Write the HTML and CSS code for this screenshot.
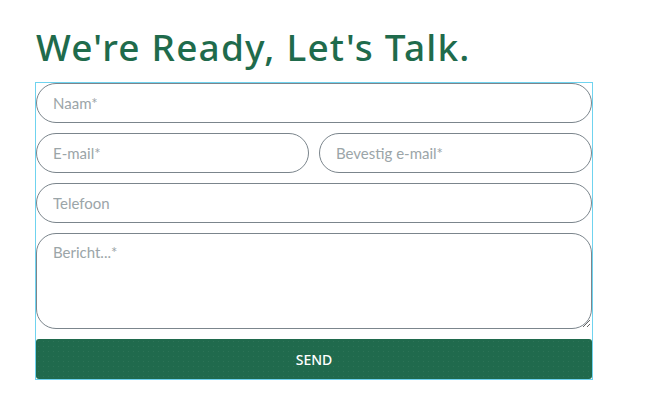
FILE: index.html
```html
<!DOCTYPE html>
<html lang="nl">
<head>
<meta charset="utf-8">
<title>Contact</title>
<link rel="stylesheet" href="styles.css">
</head>
<body>
<main class="page">
  <h1 class="title">We're Ready, Let's Talk.</h1>
  <form class="form">
    <input class="field" type="text" placeholder="Naam*">
    <div class="row">
      <input class="field" type="email" placeholder="E-mail*">
      <input class="field" type="email" placeholder="Bevestig e-mail*">
    </div>
    <input class="field" type="tel" placeholder="Telefoon">
    <textarea class="field area" placeholder="Bericht...*"></textarea>
    <button class="send" type="button">SEND</button>
  </form>
</main>
</body>
</html>
```

FILE: styles.css
```css
html, body {
  margin: 0;
  padding: 0;
  background: #ffffff;
}
.page {
  padding: 21px 0 0 35px;
  width: 558px;
}
.title {
  margin: 0 0 10px 1px;
  font-family: "Noto Sans", sans-serif;
  font-weight: 500;
  font-size: 37px;
  line-height: 51px;
  color: #1f6b4c;
  letter-spacing: 1.2px;
}
.form {
  border: 1px solid #6fd3ef;
  display: flex;
  flex-direction: column;
  gap: 10px;
  margin: 0;
}
.row {
  display: grid;
  grid-template-columns: 1fr 1fr;
  gap: 10px;
}
.field {
  box-sizing: border-box;
  height: 40px;
  width: 100%;
  margin: 0;
  border: 1px solid #7b858c;
  border-radius: 20px;
  padding: 0 16px;
  font-family: "Lato", sans-serif;
  font-size: 15px;
  color: #333;
  background: #fff;
  outline: none;
}
.field::placeholder {
  color: #9ba5a8;
}
.area {
  height: 96px;
  padding: 9px 16px;
  line-height: 18px;
  resize: vertical;
}
.send {
  height: 40px;
  border: none;
  border-radius: 3px;
  background-color: #206a4d;
  background-image: radial-gradient(rgba(255,255,255,0.06) 0.6px, transparent 0.8px);
  background-size: 5px 5px;
  color: #fff;
  font-family: "Noto Sans", sans-serif;
  font-weight: 500;
  font-size: 14px;
  cursor: pointer;
}
```
